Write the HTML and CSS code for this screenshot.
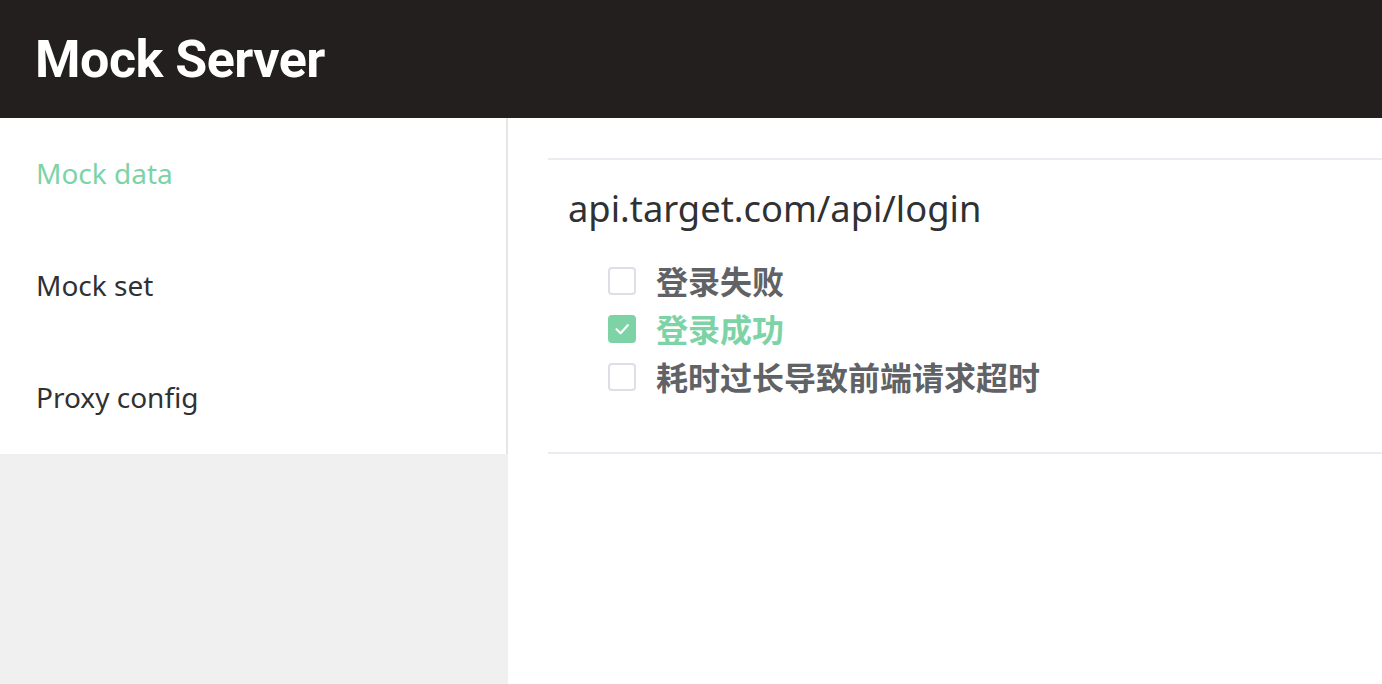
FILE: index.html
```html
<!DOCTYPE html>
<html lang="zh">
<head>
<meta charset="utf-8">
<title>Mock Server</title>
<link rel="stylesheet" href="styles.css">
</head>
<body>
<header class="topbar">
  <h1 class="brand">Mock Server</h1>
</header>
<div class="layout">
  <aside class="sidebar">
    <ul class="menu">
      <li class="menu-item active">Mock data</li>
      <li class="menu-item">Mock set</li>
      <li class="menu-item">Proxy config</li>
    </ul>
  </aside>
  <main class="main">
    <section class="api-block">
      <h3 class="api-title">api.target.com/api/login</h3>
      <div class="options">
        <label class="option">
          <span class="box"></span>
          <span class="label-text">登录失败</span>
        </label>
        <label class="option checked">
          <span class="box">
            <svg viewBox="0 0 28 28" width="28" height="28"><path d="M8.5 14.2 L12.6 18.2 L19.8 10.2" fill="none" stroke="#ffffff" stroke-width="2.2" stroke-linecap="round" stroke-linejoin="round"/></svg>
          </span>
          <span class="label-text">登录成功</span>
        </label>
        <label class="option">
          <span class="box"></span>
          <span class="label-text">耗时过长导致前端请求超时</span>
        </label>
      </div>
    </section>
  </main>
</div>
</body>
</html>
```

FILE: styles.css
```css
* {
  box-sizing: border-box;
}

html, body {
  margin: 0;
  padding: 0;
  height: 100%;
  overflow: hidden;
}

body {
  font-family: "Noto Sans", "Noto Sans CJK SC", sans-serif;
  background: #ffffff;
  color: #303133;
  display: flex;
  flex-direction: column;
}

.topbar {
  height: 118px;
  background: #231f1f;
  padding-left: 35px;
  flex: none;
}

.brand {
  margin: 0;
  font-family: Roboto, "Liberation Sans", sans-serif;
  font-weight: 700;
  font-size: 52px;
  letter-spacing: -0.5px;
  line-height: 120px;
  color: #ffffff;
}

.layout {
  flex: 1;
  display: flex;
  min-height: 0;
}

.sidebar {
  width: 508px;
  flex: none;
  background: #f0f0f0;
}

.menu {
  list-style: none;
  margin: 0;
  padding: 0;
  background: #ffffff;
  border-right: 2px solid #e6e6e6;
}

.menu-item {
  height: 112px;
  line-height: 110px;
  padding-left: 36px;
  font-size: 28px;
  color: #303133;
}

.menu-item.active {
  color: #7dd3a6;
}

.main {
  flex: 1;
  padding: 40px 0 0 40px;
}

.api-block {
  border-top: 2px solid #e9edf2;
  border-bottom: 2px solid #e9edf2;
  padding: 21px 0 51px 20px;
}

.api-title {
  margin: 0;
  font-size: 36.3px;
  font-weight: 400;
  line-height: 54px;
  color: #303133;
}

.options {
  margin-top: 22px;
  padding-left: 40px;
  display: flex;
  flex-direction: column;
}

.option {
  display: flex;
  align-items: center;
  gap: 20px;
  height: 48px;
}

.box {
  width: 28px;
  height: 28px;
  border: 2px solid #dcdfe6;
  border-radius: 4px;
  background: #ffffff;
  flex: none;
  display: flex;
  align-items: center;
  justify-content: center;
}

.checked .box {
  background: #7dd3a6;
  border-color: #7dd3a6;
}

.box svg {
  flex: none;
}

.label-text {
  font-family: "Noto Sans CJK SC", sans-serif;
  font-size: 32px;
  font-weight: 700;
  line-height: 48px;
  padding-bottom: 3px;
  color: #606266;
}

.checked .label-text {
  color: #7dd3a6;
}
```
